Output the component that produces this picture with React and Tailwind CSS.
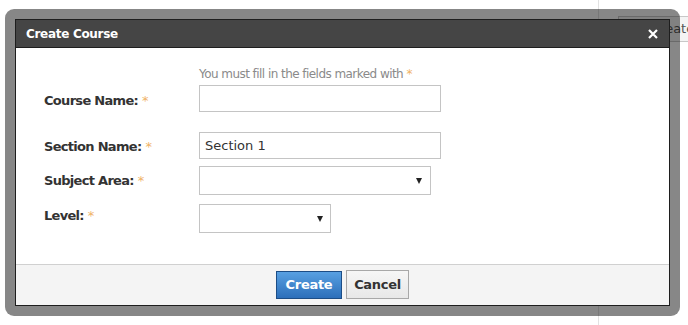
export default function App() {
  const label = "text-[13px] font-bold text-[#333] [font-family:'DejaVu_Sans',Verdana,sans-serif] tracking-[-0.7px]";
  const star = "text-[#f0b266] font-normal ml-[4px]";
  return (
    <div className="relative w-[688px] h-[325px] bg-white overflow-hidden [font-family:'DejaVu_Sans',sans-serif]">
      {/* background page */}
      <div className="absolute left-[598px] top-0 w-px h-full bg-[#e2e2e2]" />
      <div className="absolute left-[618px] top-[16px] w-[90px] h-[26px] border border-[#c8c8c8] bg-[#f4f4f4] text-[13px] text-[#555] leading-[24px] pl-[32px]">Create</div>

      {/* modal frame */}
      <div className="absolute left-[5px] top-[9px] w-[675px] h-[307px] rounded-[9px] bg-[rgba(0,0,0,0.47)] p-[10px]">
        <div className="flex flex-col h-full border border-[#1e1e1e] bg-white">
          <div className="flex items-center justify-between h-[28px] bg-[#454545] border-b border-[#1e1e1e] pl-[10px] pr-[10px]">
            <span className="text-white font-bold text-[12px] tracking-[-0.3px]">Create Course</span>
            <svg width="10" height="10" viewBox="0 0 10 10" className="mr-[1px]">
              <path d="M1 1 L9 9 M9 1 L1 9" stroke="white" strokeWidth="2.2" />
            </svg>
          </div>
          <div className="flex-1 flex">
            <div className="w-[183px] shrink-0 pl-[28px] flex flex-col">
              <div className={`${label} mt-[43px]`}>Course Name:<span className={star}>*</span></div>
              <div className={`${label} mt-[26px]`}>Section Name:<span className={star}>*</span></div>
              <div className={`${label} mt-[15px]`}>Subject Area:<span className={star}>*</span></div>
              <div className={`${label} mt-[15px]`}>Level:<span className={star}>*</span></div>
            </div>
            <div className="flex flex-col">
              <div className="text-[12px] text-[#8a8a8a] mt-[17px] h-[20px] tracking-[-0.55px]">You must fill in the fields marked with <span className="text-[#f0b266]">*</span></div>
              <div className="w-[242px] h-[27px] border border-[#c4c4c4]" />
              <div className="w-[242px] h-[27px] border border-[#c4c4c4] mt-[20px] text-[13px] text-[#333] leading-[25px] pl-[5px]">Section 1</div>
              <div className="w-[232px] h-[29px] border border-[#c4c4c4] mt-[7px] flex items-center justify-end pr-[8px]">
                <svg width="6" height="6" viewBox="0 0 6 6"><path d="M0 0 H6 L3 6 Z" fill="#222" /></svg>
              </div>
              <div className="w-[132px] h-[29px] border border-[#c4c4c4] mt-[9px] flex items-center justify-end pr-[7px]">
                <svg width="6" height="6" viewBox="0 0 6 6"><path d="M0 0 H6 L3 6 Z" fill="#222" /></svg>
              </div>
            </div>
          </div>
          <div className="h-[41px] bg-[#f4f4f4] border-t border-[#d0d0d0] flex items-start justify-center gap-[4px] pt-[6px]">
            <button className="w-[66px] h-[28px] border border-[#1c4d86] bg-gradient-to-b from-[#58a0e2] to-[#2c6fba] text-white font-bold text-[13px] tracking-[-0.3px]">Create</button>
            <button className="w-[63px] h-[29px] -mt-[1px] border border-[#a8a8a8] bg-gradient-to-b from-[#f6f6f6] to-[#e8e8e8] text-[#333] font-bold text-[13px] tracking-[-0.3px]">Cancel</button>
          </div>
        </div>
      </div>
    </div>
  );
}
